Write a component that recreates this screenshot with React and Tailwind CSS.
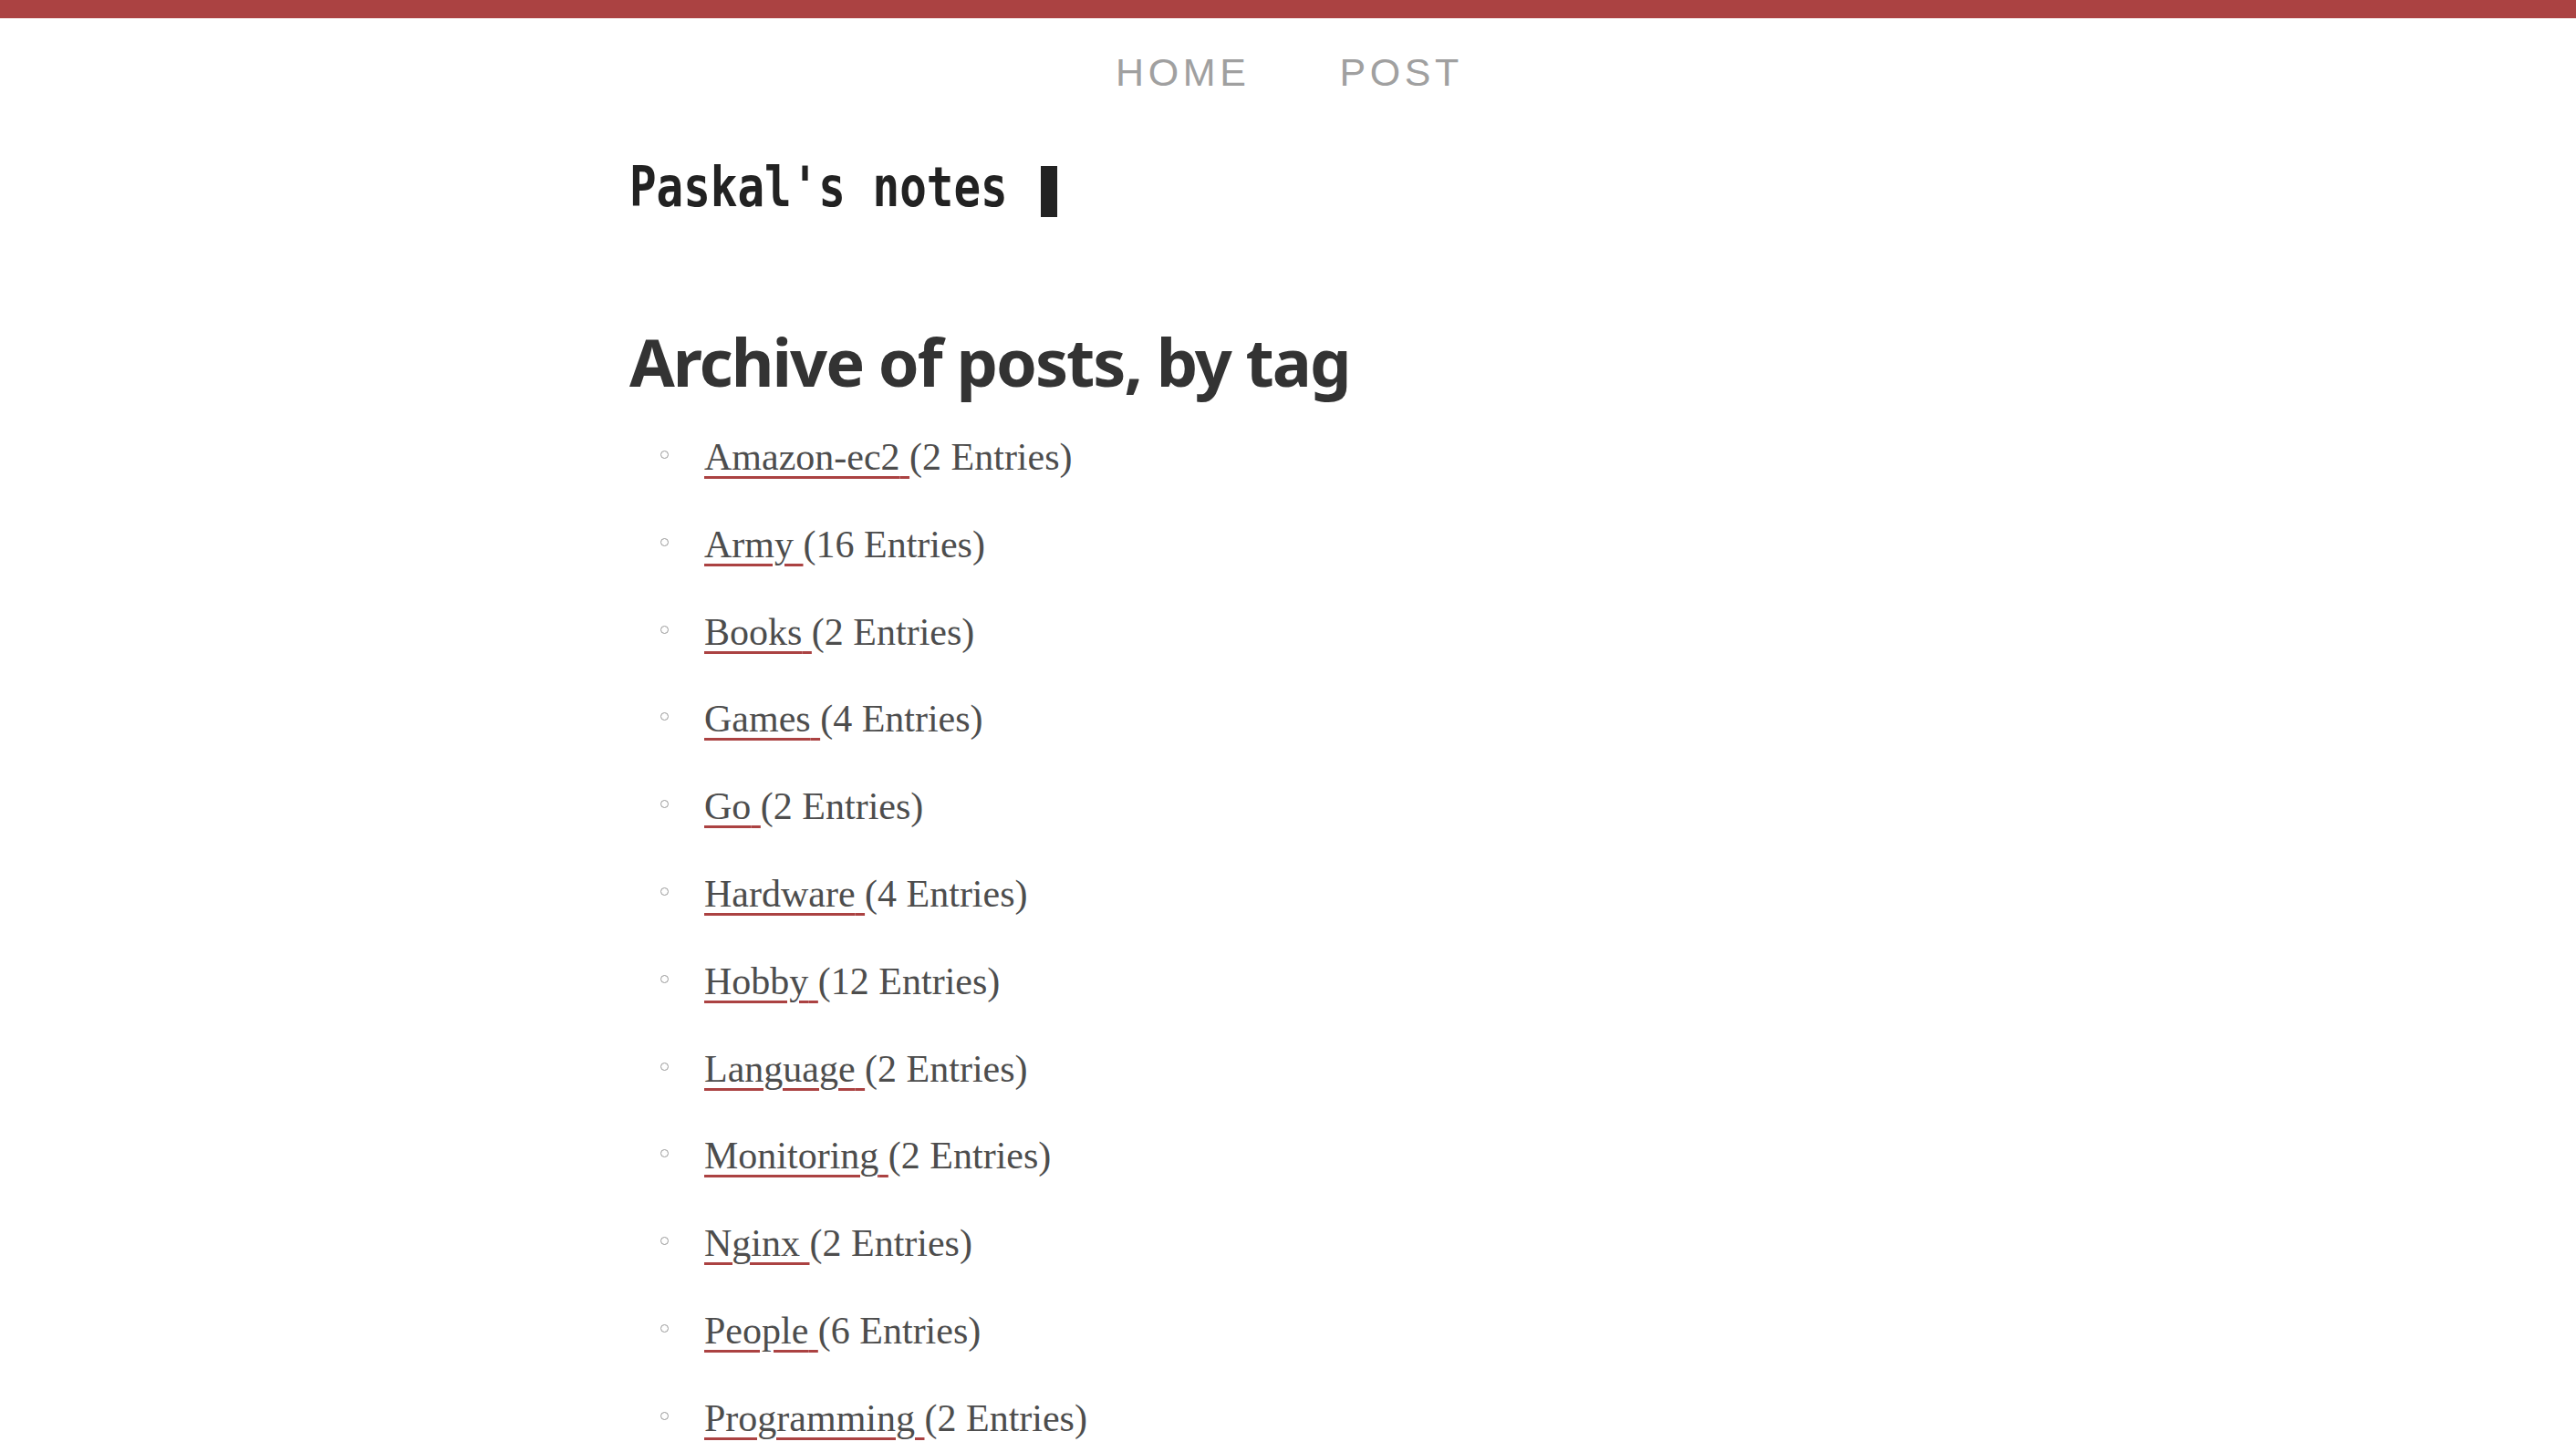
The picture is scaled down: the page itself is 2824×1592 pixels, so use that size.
import React from "react";

const tags = [
  ["Amazon-ec2", 2],
  ["Army", 16],
  ["Books", 2],
  ["Games", 4],
  ["Go", 2],
  ["Hardware", 4],
  ["Hobby", 12],
  ["Language", 2],
  ["Monitoring", 2],
  ["Nginx", 2],
  ["People", 6],
  ["Programming", 2],
];

export default function App() {
  return (
    <div className="min-h-screen bg-white">
      <div className="h-[20px] bg-[#ab4242]" />
      <nav className="mt-[38px] flex justify-center gap-[98px] pl-[3px]">
        {["HOME", "POST"].map((n) => (
          <a
            key={n}
            className="text-[43px] leading-none tracking-[4.6px] text-[#a0a0a0] font-['Liberation_Sans',Arial,sans-serif]"
          >
            {n}
          </a>
        ))}
      </nav>
      <main className="mx-auto w-[1444px]">
        <div className="mt-[74px] flex h-[60px] origin-left scale-x-[0.82] items-start font-['DejaVu_Sans_Mono',monospace] text-[60px] font-bold leading-none text-[#222]">
          <span>Paskal's notes</span>
          <span className="ml-[44px] mt-[7px] inline-block h-[56px] w-[22px] bg-[#222]" />
        </div>
        <h1 className="mt-[125px] font-['Noto_Sans',sans-serif] text-[72px] font-bold leading-none tracking-[-2px] text-[#333]">
          Archive of posts, by tag
        </h1>
        <ul className="mt-[48px]">
          {tags.map(([t, c]) => (
            <li key={t} className="flex h-[95.8px] items-start">
              <span className="ml-[34px] mt-[14px] inline-block h-[9px] w-[9px] rounded-full border border-[#999]" />
              <span className="ml-[39px] font-['Liberation_Serif',serif] text-[42px] leading-none text-[#4d4d4d]">
                <a className="underline decoration-[#ab4242] decoration-[3px] underline-offset-[7px]">
                  {t}{" "}
                </a>
                ({c} Entries)
              </span>
            </li>
          ))}
        </ul>
      </main>
    </div>
  );
}
